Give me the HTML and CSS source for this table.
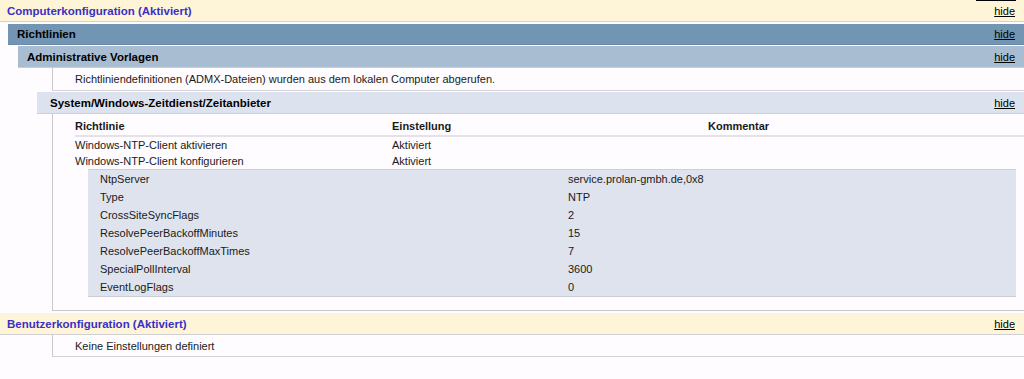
FILE: index.html
```html
<!DOCTYPE html>
<html lang="de">
<head>
<meta charset="utf-8">
<title>Gruppenrichtlinie</title>
<link rel="stylesheet" href="styles.css">
</head>
<body>
<div class="topmark"></div>
<div class="band he0"><span class="title">Computerkonfiguration (Aktiviert)</span><a class="hide" href="#">hide</a></div>
<div class="band he1"><span>Richtlinien</span><a class="hide" href="#">hide</a></div>
<div class="band he2"><span>Administrative Vorlagen</span><a class="hide" href="#">hide</a></div>
<div class="box note">Richtliniendefinitionen (ADMX-Dateien) wurden aus dem lokalen Computer abgerufen.</div>
<div class="band he3"><span>System/Windows-Zeitdienst/Zeitanbieter</span><a class="hide" href="#">hide</a></div>
<div class="box content">
  <div class="grid head">
    <span>Richtlinie</span><span>Einstellung</span><span>Kommentar</span>
  </div>
  <div class="grid row">
    <span>Windows-NTP-Client aktivieren</span><span>Aktiviert</span><span></span>
  </div>
  <div class="grid row">
    <span>Windows-NTP-Client konfigurieren</span><span>Aktiviert</span><span></span>
  </div>
  <div class="sub">
    <div class="subrow"><span>NtpServer</span><span>service.prolan-gmbh.de,0x8</span></div>
    <div class="subrow"><span>Type</span><span>NTP</span></div>
    <div class="subrow"><span>CrossSiteSyncFlags</span><span>2</span></div>
    <div class="subrow"><span>ResolvePeerBackoffMinutes</span><span>15</span></div>
    <div class="subrow"><span>ResolvePeerBackoffMaxTimes</span><span>7</span></div>
    <div class="subrow"><span>SpecialPollInterval</span><span>3600</span></div>
    <div class="subrow"><span>EventLogFlags</span><span>0</span></div>
  </div>
</div>
<div class="band he0 second"><span class="title">Benutzerkonfiguration (Aktiviert)</span><a class="hide" href="#">hide</a></div>
<div class="box note last">Keine Einstellungen definiert</div>
</body>
</html>
```
FILE: styles.css
```css
html, body {
  margin: 0;
  padding: 0;
  background: #fefcfe;
  font-family: "Liberation Sans", Arial, sans-serif;
  font-size: 11px;
  color: #1a1a1a;
}

.topmark {
  position: absolute;
  top: 0;
  left: 976px;
  width: 40px;
  height: 1px;
  background: #000;
}

.band {
  display: flex;
  align-items: center;
  justify-content: space-between;
  height: 21px;
  border-bottom: 1px solid #cfcfd4;
  font-weight: bold;
  font-size: 11.5px;
  color: #000;
  padding-right: 9px;
}

.band .hide {
  font-weight: normal;
  font-size: 11px;
  color: #000;
  text-decoration: underline;
}

.he0 {
  background: #fef5d8;
  padding-left: 7px;
}
.he0 .title {
  color: #3a2fc6;
}

.he1 {
  margin-top: 2px;
  margin-left: 8px;
  padding-left: 9px;
  background: #7195b3;
  border-bottom-color: #6a8aa6;
  height: 20px;
}

.he2 {
  margin-top: 1px;
  margin-left: 18px;
  padding-left: 9px;
  background: #a9bdd2;
  border-bottom-color: #c9cfd8;
}

.he3 {
  margin-top: 1px;
  margin-left: 37px;
  padding-left: 13px;
  background: #dde3ee;
}

.box {
  margin-left: 52px;
  border-left: 1px solid #c8c8cc;
  padding-left: 22px;
}

.note {
  height: 22px;
  display: flex;
  align-items: center;
  border-bottom: 1px solid #d6d3d8;
}

.content {
  padding-top: 3px;
  padding-bottom: 13px;
  border-bottom: 1px solid #c8c8cc;
}

.grid {
  display: grid;
  grid-template-columns: 317px 316px 1fr;
}

.head {
  font-weight: bold;
  height: 18px;
  align-items: center;
  border-bottom: 2px solid #e4e2e6;
}

.row {
  height: 16px;
  align-items: center;
}

.sub {
  margin-left: 13px;
  margin-right: 8px;
  background: #dfe3ee;
  border-top: 1px solid #cdcfd6;
  border-bottom: 1px solid #cdcfd6;
}

.subrow {
  display: grid;
  grid-template-columns: 468px 1fr;
  height: 18px;
  align-items: center;
  padding-left: 12px;
}

.second {
  margin-top: 2px;
}

.last {
  height: 21px;
}
```
